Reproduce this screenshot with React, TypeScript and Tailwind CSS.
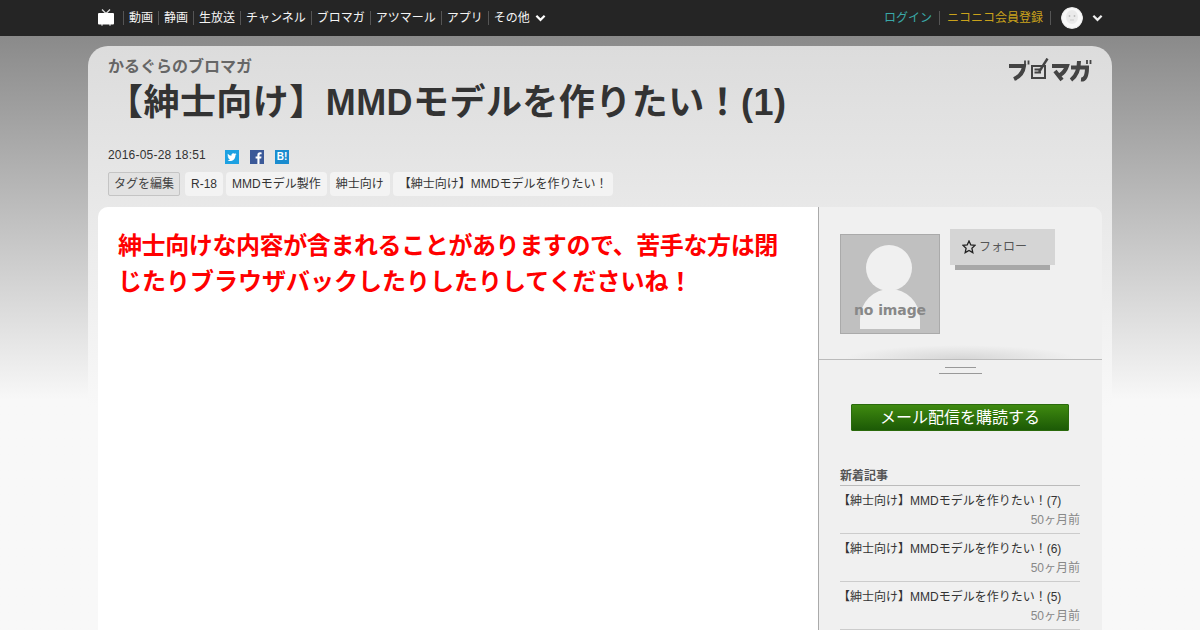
const nav = ["動画", "静画", "生放送", "チャンネル", "ブロマガ", "アツマール", "アプリ"];
const tags = ["R-18", "MMDモデル製作", "紳士向け", "【紳士向け】MMDモデルを作りたい！"];
const posts = ["7", "6", "5"];

function Chevron({ className }: { className?: string }) {
  return (
    <svg viewBox="0 0 12 8" className={className} fill="none" stroke="currentColor" strokeWidth="2.4">
      <path d="M1.5 1.5 L6 6 L10.5 1.5" />
    </svg>
  );
}

export default function App() {
  return (
    <div className="w-[1200px] h-[630px] overflow-hidden bg-gradient-to-b from-[#8a8a8a] from-[36px] to-[#f8f8f8] to-[400px] font-['Liberation_Sans','Noto_Sans_CJK_JP',sans-serif] text-[#333]">
      <header className="h-9 bg-[#252525] flex items-center justify-between pl-[98px] pr-[97px] text-[#f4f4f4] text-xs">
        <div className="flex items-center">
          <svg viewBox="0 0 16 17" className="w-4 h-[17px] mr-[9px] -mt-[1px]">
            <path d="M4 0.5 L8 4.5 L12 0.5" fill="none" stroke="#ddd" strokeWidth="1.3" />
            <rect x="0" y="4" width="16" height="11.5" rx="1" fill="#fff" />
            <rect x="3" y="15" width="2" height="1.5" fill="#ccc" />
            <rect x="11" y="15" width="2" height="1.5" fill="#ccc" />
          </svg>
          {nav.map((n) => (
            <span key={n} className="border-l border-[#555] pl-[5px] pr-[5px] leading-[14px]">{n}</span>
          ))}
          <span className="border-l border-[#555] pl-[5px] leading-[14px]">その他</span>
          <Chevron className="w-[11px] h-2 ml-[5px] text-white" />
        </div>
        <div className="flex items-center">
          <span className="text-[#3aa8a8] pr-[7px] leading-[14px]">ログイン</span>
          <span className="text-[#c9a21b] border-l border-r border-[#555] px-[7px] leading-[14px]">ニコニコ会員登録</span>
          <span className="ml-[10px] w-[22px] h-[22px] rounded-full overflow-hidden">
            <svg viewBox="0 0 22 22" className="w-[22px] h-[22px]">
              <circle cx="11" cy="11" r="11" fill="#e8e8e8" />
              <circle cx="11" cy="11" r="10" fill="#f8f8f8" />
              <ellipse cx="11" cy="10" rx="6" ry="7" fill="#eaeaea" />
              <circle cx="8.5" cy="9" r="0.9" fill="#bbb" />
              <circle cx="13.5" cy="9" r="0.9" fill="#bbb" />
              <path d="M9 13 H13" stroke="#ccc" strokeWidth="1" />
            </svg>
          </span>
          <Chevron className="w-[11px] h-2 ml-[9px] text-[#eee]" />
        </div>
      </header>

      <main className="mt-[10px] mx-[88px] h-[584px] rounded-t-[20px] bg-gradient-to-b from-[#dcdcdc] to-[#f8f8f8] to-[360px] px-[10px]">
        <div className="relative h-[161px] px-[10px] pt-[11px]">
          <p className="text-base font-bold text-[#666] leading-[20px]">かるぐらのブロマガ</p>
          <h1 className="text-[36px] font-bold leading-[52px] text-[#333] tracking-[0.45px] -ml-[1px]">【紳士向け】MMDモデルを作りたい！(1)</h1>
          <div className="flex items-center mt-[18px] h-[16px]">
            <span className="text-xs text-[#333] tracking-[0.2px]">2016-05-28 18:51</span>
            <div className="flex gap-[11px] ml-[19px] mt-[4px]">
              <svg viewBox="0 0 14 14" className="w-[14px] h-[14px]">
                <rect width="14" height="14" fill="#1da1e2" />
                <path d="M11.5 4 Q10.8 4.4 10.2 4.4 Q10.8 4 11 3.3 Q10.3 3.7 9.7 3.8 A2 2 0 0 0 6.4 5.7 Q4.2 5.6 2.8 3.8 Q2.1 5.3 3.5 6.5 Q3 6.5 2.6 6.2 Q2.7 7.8 4.2 8.2 Q3.7 8.3 3.3 8.2 Q3.8 9.5 5.2 9.6 Q4 10.6 2.4 10.4 Q4.2 11.4 6.2 11 Q10.4 10 10.5 5.3 Q11.1 4.8 11.5 4Z" fill="#fff" />
              </svg>
              <svg viewBox="0 0 14 14" className="w-[14px] h-[14px]">
                <rect width="14" height="14" fill="#3b5998" />
                <path d="M9.5 14 V8.6 H11.2 L11.5 6.5 H9.5 V5.2 Q9.5 4.2 10.5 4.2 H11.6 V2.4 Q10.8 2.2 10 2.2 Q7.4 2.2 7.4 4.9 V6.5 H5.6 V8.6 H7.4 V14Z" fill="#fff" />
              </svg>
              <span className="w-[14px] h-[14px] bg-[#1a8ccf] text-white text-[10px] font-bold leading-[14px] text-center">B!</span>
            </div>
          </div>
          <div className="flex items-center gap-[3px] mt-[9px] text-xs text-[#333]">
            <span className="h-6 px-[5px] mr-[2px] leading-[22px] bg-[#e2e2e2] border border-[#c4c4c4] rounded-[2px] text-[#444]">タグを編集</span>
            {tags.map((t) => (
              <span key={t} className="h-6 px-[6px] leading-[24px] bg-[#f3f3f3] rounded-[4px]">{t}</span>
            ))}
          </div>
          <svg viewBox="0 0 84 24" className="absolute right-[10px] top-[12px] w-[84px] h-[24px]" fill="none" stroke="#444" strokeWidth="4">
            <path d="M1 8 H16 Q15 17 6 21" />
            <path d="M17 2.5 V6.5 M20.5 2.5 V6.5" strokeWidth="1.8" />
            <path d="M24 8 H37 V20 H24 Z M26.5 11.5 H32 M26.5 14.5 H33" strokeWidth="2" />
            <path d="M31 14 L39.5 0.5" strokeWidth="2.4" />
            <path d="M44 8 H59 Q57 14 52 17 M47 13 L54 22" />
            <path d="M63 9.5 H79 Q79 22 73 21.5 M71 3 Q71 16 63 22" />
            <path d="M79 2 V6 M82.5 2 V6" strokeWidth="1.8" />
          </svg>
        </div>

        <div className="flex h-[423px] rounded-t-[10px] overflow-hidden bg-[#f0f0f0]">
          <article className="w-[720px] bg-white px-5 pt-[21px]">
            <p className="text-[24px] font-bold leading-9 text-[#f00]">
              <span className="tracking-[-0.4px]">紳士向けな内容が含まれることがありますので、苦手な方は閉</span>じたりブラウザバックしたりしたりしてくださいね！
            </p>
          </article>
          <aside className="flex-1 border-l border-[#aaa] bg-[#f0f0f0]">
            <div className="relative h-[153px] border-b border-[#bbb] pl-[21px] pt-[27px] flex items-start">
              <div className="relative w-[100px] h-[100px] bg-[#c0c0c0] border border-[#aaa] overflow-hidden shrink-0">
                <div className="absolute left-[25px] top-[10px] w-[46px] h-[46px] rounded-full bg-[#f0f0f0]" />
                <div className="absolute left-[19px] top-[54px] w-[60px] h-[40px] rounded-t-[30px] bg-[#f0f0f0]" />
                <span className="absolute left-0 right-0 top-[66px] text-center text-[14px] font-bold leading-[18px] text-[#888] font-['DejaVu_Sans',sans-serif] tracking-[-0.1px]">no image</span>
              </div>
              <div className="relative ml-[10px] -mt-[5px] w-[105px] h-[41px]">
                <div className="absolute left-[5px] right-[5px] bottom-0 h-[5px] bg-[#a8a8a8]" />
                <div className="h-9 bg-[#d5d5d5] flex items-center pl-[12px] text-xs text-[#555]">
                  <svg viewBox="0 0 14 14" className="w-[14px] h-[14px] mr-[3px]" fill="none" stroke="#222" strokeWidth="1.3">
                    <path d="M7 1 L8.8 5 L13 5.4 L9.9 8.2 L10.8 12.6 L7 10.4 L3.2 12.6 L4.1 8.2 L1 5.4 L5.2 5Z" />
                  </svg>
                  フォロー
                </div>
              </div>
              <div className="absolute left-[25px] right-[25px] bottom-0 h-[14px] bg-[radial-gradient(ellipse_at_bottom,#d6d6d6,transparent_70%)]" />
            </div>
            <div className="flex flex-col items-center pt-[7px] gap-[5px]">
              <div className="w-[31px] h-px bg-[#999]" />
              <div className="w-[43px] h-px bg-[#999]" />
            </div>
            <div className="ml-[21px] mr-[22px]">
              <div className="mt-[30px] mx-[11px] h-[27px] bg-gradient-to-b from-[#3f8a10] to-[#1c5a06] border border-[#2a6a0c] rounded-[1px] text-white text-base leading-[25px] text-center">メール配信を購読する</div>
              <h2 className="mt-[37px] text-xs font-bold text-[#555] leading-[17px] border-b border-[#bbb]">新着記事</h2>
              {posts.map((p) => (
                <div key={p} className="h-12 border-b border-[#ccc] pt-[6px] text-xs leading-[18px] text-[#333]">
                  <p className="-ml-[2px]">【紳士向け】MMDモデルを作りたい！({p})</p>
                  <p className="text-right text-[#888] leading-[20px]">50ヶ月前</p>
                </div>
              ))}
            </div>
          </aside>
        </div>
      </main>
    </div>
  );
}
